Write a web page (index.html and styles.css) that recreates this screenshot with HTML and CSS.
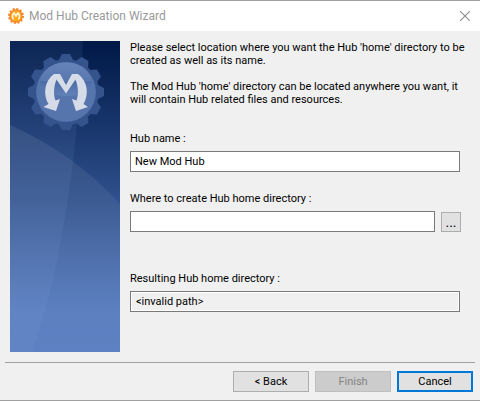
FILE: index.html
```
<!DOCTYPE html>
<html lang="en">
<head>
    <meta charset="utf-8">
    <title>Mod Hub Creation Wizard</title>
    <link rel="stylesheet" href="styles.css">
</head>
<body>
    <header class="titlebar">
        <svg class="app-icon" viewBox="0 0 16 16" aria-hidden="true">
            <circle cx="8" cy="8" r="7" fill="none" stroke="#f08a3c" stroke-width="2" stroke-dasharray="2.2 1.465"/>
            <circle cx="8" cy="8" r="6.7" fill="#f58a1f"/>
            <circle cx="8" cy="8" r="5.3" fill="#ffa91c"/>
            <path d="M5.4 11.4C4 9 4.400 6.500 6 4.800L8 8L10 4.800C11.600 6.500 12 9 10.600 11.400" fill="none" stroke="#fff3dc" stroke-width="1.700"/>
        </svg>
        <h1>Mod Hub Creation Wizard</h1>
        <button type="button" class="close" aria-label="Close">
            <svg viewBox="0 0 10 10" aria-hidden="true"><path d="M0 0L10 10M10 0L0 10" stroke="#8c8c8c" stroke-width="1.1"/></svg>
        </button>
    </header>

    <form class="wizard">
        <div class="content">
            <div class="banner">
                <svg viewBox="0 0 110 311" preserveAspectRatio="xMidYMin slice" aria-hidden="true">
                    <defs>
                        <linearGradient id="sky" x1="0" y1="0" x2="0" y2="1">
                            <stop offset="0" stop-color="#001846"/>
                            <stop offset="0.3" stop-color="#1b3970"/>
                            <stop offset="0.5" stop-color="#2e4f8b"/>
                            <stop offset="0.68" stop-color="#4668a6"/>
                            <stop offset="0.87" stop-color="#5a7ebf"/>
                            <stop offset="1" stop-color="#5d81c1"/>
                        </linearGradient>
                        <linearGradient id="arc" x1="0" y1="0" x2="0" y2="1">
                            <stop offset="0" stop-color="#fff" stop-opacity="0.09"/>
                            <stop offset="1" stop-color="#fff" stop-opacity="0"/>
                        </linearGradient>
                        <linearGradient id="disc" x1="0" y1="0" x2="0" y2="1">
                            <stop offset="0" stop-color="#6683b9"/>
                            <stop offset="0.54" stop-color="#5978b0"/>
                            <stop offset="0.56" stop-color="#4c6ca7"/>
                            <stop offset="1" stop-color="#6382b8"/>
                        </linearGradient>
                        <path id="tooth" d="M49 19L52 13H60L63 19Z"/>
                    </defs>
                    <rect width="110" height="311" fill="url(#sky)"/>
                    <path d="M0 84Q66 114 110 163V311H0Z" fill="url(#arc)"/>
                    <path d="M0 0H73C68 110 50 240 21 311H0Z" fill="#8db4ee" fill-opacity="0.09"/>
                    <g fill="#35548d">
                        <circle cx="56" cy="51" r="33"/>
                        <use href="#tooth"/>
                        <use href="#tooth" transform="rotate(30 56 51)"/>
                        <use href="#tooth" transform="rotate(60 56 51)"/>
                        <use href="#tooth" transform="rotate(90 56 51)"/>
                        <use href="#tooth" transform="rotate(120 56 51)"/>
                        <use href="#tooth" transform="rotate(150 56 51)"/>
                        <use href="#tooth" transform="rotate(180 56 51)"/>
                        <use href="#tooth" transform="rotate(210 56 51)"/>
                        <use href="#tooth" transform="rotate(240 56 51)"/>
                        <use href="#tooth" transform="rotate(270 56 51)"/>
                        <use href="#tooth" transform="rotate(300 56 51)"/>
                        <use href="#tooth" transform="rotate(330 56 51)"/>
                    </g>
                    <circle cx="56" cy="51" r="30" fill="#4c6ba4"/>
                    <circle cx="56" cy="51" r="29.500" fill="#5675ad"/>
                    <path d="M56 21.500C74 21.500 85 35 81 46Q70 55 56 55Q42 55 31 46C27 35 38 21.500 56 21.500Z" fill="url(#disc)"/>
                    <path d="M44 33H50L56 44L62 33H68C78 40 79 54 73.500 63L78 66L66 70L62 58L66.500 59.500C69 53 68 45 65.500 38.500L56 52.500L46.500 38.500C44 45 43 53 45.500 59.500L50 58L46 70L33.500 66L38.500 63C33 54 34 40 44 33Z" fill="#d5dbe7"/>
                </svg>
            </div>

            <div class="fields">
                <div class="intro">
                    <p>Please select location where you want the Hub 'home' directory to be created as well as its name.</p>
                    <p>The Mod Hub 'home' directory can be located anywhere you want, it will contain Hub related files and resources.</p>
                </div>

                <div class="field">
                    <label for="hub-name">Hub name :</label>
                    <input type="text" id="hub-name" value="New Mod Hub">
                </div>

                <div class="field location">
                    <label for="hub-location">Where to create Hub home directory :</label>
                    <div class="browse-row">
                        <input type="text" id="hub-location">
                        <button type="button" class="btn browse" aria-label="Browse">...</button>
                    </div>
                </div>

                <div class="field">
                    <label for="hub-result">Resulting Hub home directory :</label>
                    <input type="text" id="hub-result" class="result" value="&lt;invalid path&gt;" readonly>
                </div>
            </div>
        </div>

        <footer class="actions">
            <button type="button" class="btn">&lt; Back</button>
            <button type="submit" class="btn" disabled>Finish</button>
            <button type="button" class="btn default">Cancel</button>
        </footer>
    </form>
</body>
</html>
```
FILE: styles.css
```
* {
    box-sizing: border-box;
}

body {
    margin: 0;
    min-height: 100vh;
    display: flex;
    flex-direction: column;
    background: #f0f0f0;
    border-top: 1px solid #a0a0a0;
    border-bottom: 1px solid #a0a0a0;
    color: #000;
    font-family: Roboto, sans-serif;
    font-size: 11px;
    line-height: 13px;
}

h1, p {
    margin: 0;
}

input, button {
    font: inherit;
    color: inherit;
}

.titlebar {
    display: flex;
    align-items: center;
    height: 30px;
    padding: 0 10px 0 8px;
    background: #fff;
}

.titlebar h1 {
    flex: 1;
    margin-left: 5px;
    color: #999;
    font-size: 12px;
    font-weight: normal;
    line-height: 16px;
}

.app-icon {
    width: 16px;
    height: 16px;
}

.close {
    display: flex;
    padding: 0;
    border: none;
    background: none;
}

.close svg {
    width: 10px;
    height: 10px;
}

.wizard {
    flex: 1;
    display: flex;
    flex-direction: column;
}

.content {
    flex: 1;
    display: flex;
    gap: 10px;
    padding: 10px 20px 10px 10px;
}

.banner {
    position: relative;
    width: 110px;
    flex-shrink: 0;
}

.banner svg {
    position: absolute;
    width: 100%;
    height: 100%;
}

.fields {
    flex: 1;
    min-width: 0;
    display: flex;
    flex-direction: column;
    gap: 20px;
}

.intro {
    display: flex;
    flex-direction: column;
    gap: 13px;
    margin-right: -10px;
    padding-bottom: 6px;
}

.field {
    display: flex;
    flex-direction: column;
    gap: 6px;
}

.location {
    padding-bottom: 20px;
}

.field input {
    width: 100%;
    height: 21px;
    padding: 0 4px;
    border: 1px solid #7a7a7a;
    border-radius: 0;
    background: #fff;
    outline: none;
}

.field .result {
    padding: 0 5px;
    background: #f0f0f0;
    box-shadow: inset 0 0 0 1px #fff;
}

.browse-row {
    display: flex;
    align-items: flex-end;
    gap: 6px;
    margin-right: -1px;
}

.actions {
    display: flex;
    justify-content: flex-end;
    gap: 6px;
    margin: 0 5px;
    padding: 8px 2px;
    border-top: 1px solid #a0a0a0;
}

.btn {
    width: 76px;
    height: 21px;
    padding: 0;
    border: 1px solid #adadad;
    background: #e1e1e1;
}

.btn.browse {
    width: 20px;
    height: 20px;
    flex-shrink: 0;
    font-size: 14px;
}

.btn.default {
    border: 2px solid #0078d7;
}

.btn:disabled {
    border-color: #bfbfbf;
    background: #ccc;
    color: #838383;
}
```
